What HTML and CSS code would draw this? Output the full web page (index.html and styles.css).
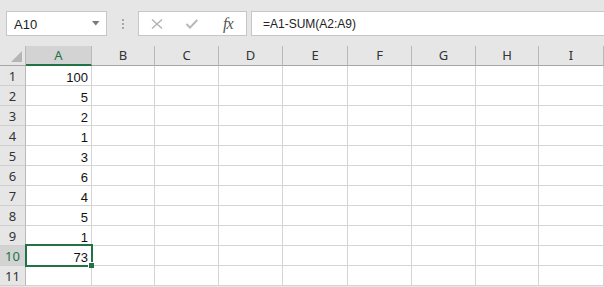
FILE: index.html
```html
<!DOCTYPE html>
<html lang="en">
<head>
  <meta charset="UTF-8">
  <title>Worksheet</title>
  <link rel="stylesheet" href="styles.css">
</head>
<body>

  <div class="toolbar">
    <div class="namebox">
      <span>A10</span>
      <svg class="caret" width="8" height="5" viewBox="0 0 8 5"><path d="M0 0H7.5L3.75 4.5Z" fill="#7a7a7a"/></svg>
    </div>
    <div class="grip"><i></i><i></i><i></i></div>
    <div class="buttons">
      <svg width="12" height="10" viewBox="0 0 12 10"><path d="M1 0.5L11 9.5M11 0.5L1 9.5" stroke="#b2b2b2" stroke-width="1.4" fill="none"/></svg>
      <svg width="12" height="10" viewBox="0 0 12 10"><path d="M0.5 5L4 8.6L11.2 1" stroke="#b8b8b8" stroke-width="2" fill="none"/></svg>
      <span class="fx">fx</span>
    </div>
    <div class="formula">=A1-SUM(A2:A9)</div>
  </div>

  <div class="sheet" id="sheet"></div>

  <script>
    const sheet = document.getElementById("sheet");
    const cols = ["A", "B", "C", "D", "E", "F", "G", "H", "I"];
    const values = [100, 5, 2, 1, 3, 6, 4, 5, 1, 73];

    let html = `<div class="head corner"><span class="tri"></span></div>`;
    cols.forEach(c => {
      html += `<div class="head col ${c === "A" ? "active" : ""}">${c}</div>`;
    });

    for (let r = 1; r <= 11; r++) {
      html += `<div class="head row ${r === 10 ? "active" : ""}">${r}</div>`;
      cols.forEach(c => {
        const v = c === "A" && values[r - 1] !== undefined ? values[r - 1] : "";
        const sel = c === "A" && r === 10 ? "selected" : "";
        html += `<div class="cell ${sel}">${v}</div>`;
      });
    }

    sheet.innerHTML = html;
  </script>
</body>
</html>
```

FILE: styles.css
```css
body {
  margin: 0;
  background: #e6e6e6;
  font-family: "Liberation Sans", Arial, sans-serif;
  overflow: hidden;
}

.toolbar {
  display: flex;
  height: 25px;
  padding: 11px 0 10px 6px;
}

.namebox {
  width: 101px;
  box-sizing: border-box;
  background: #fff;
  border: 1px solid #c6c6c6;
  display: flex;
  align-items: center;
  justify-content: space-between;
  padding: 1px 6px 0 7px;
  font-size: 13px;
  color: #222;
}

.caret {
  margin-top: -1px;
}

.grip {
  width: 31px;
  display: flex;
  flex-direction: column;
  align-items: center;
  justify-content: center;
  gap: 2px;
  padding-top: 1px;
  box-sizing: border-box;
}

.grip i {
  width: 2px;
  height: 2px;
  background: #a8a8a8;
}

.buttons {
  width: 109px;
  box-sizing: border-box;
  background: #fff;
  border: 1px solid #c6c6c6;
  display: flex;
  align-items: center;
  padding: 0 0 0 12px;
  gap: 24px;
}

.buttons svg:nth-child(2) {
  margin-left: -1px;
}

.fx {
  font-family: "Liberation Serif", "Times New Roman", serif;
  font-style: italic;
  font-size: 16px;
  color: #555;
  margin-left: 1px;
  letter-spacing: -1px;
}

.formula {
  flex: 1;
  margin-left: 4px;
  background: #fff;
  border: 1px solid #c6c6c6;
  border-right: none;
  padding: 5px 0 0 11px;
  font-size: 12px;
  color: #222;
}

.sheet {
  display: grid;
  grid-template-columns: 26px 66px 63px 64px 64px 65px 64px 64px 63px 65px;
  grid-auto-rows: 20px;
}

.head {
  box-sizing: border-box;
  font-family: "Noto Sans", sans-serif;
  font-size: 13px;
  color: #333;
  text-align: center;
  background: #e6e6e6;
}

.col {
  border-right: 1px solid #b9b9b9;
  border-bottom: 1px solid #a6a6a6;
  padding-top: 1px;
  line-height: 17px;
}

.col.active {
  background: #d3d3d3;
  border-bottom: 2px solid #217346;
  color: #217346;
}

.row {
  border-right: 1px solid #b9b9b9;
  border-bottom: 1px solid #cfcfcf;
  line-height: 18px;
  padding-top: 1px;
}

.row.active {
  background: #d3d3d3;
  color: #217346;
}

.corner {
  border-right: 1px solid #b9b9b9;
  border-bottom: 1px solid #a6a6a6;
  position: relative;
}

.tri {
  position: absolute;
  right: 3px;
  bottom: 3px;
  width: 0;
  height: 0;
  border-left: 11px solid transparent;
  border-bottom: 11px solid #b5b5b5;
}

.cell {
  box-sizing: border-box;
  background: #fff;
  border-right: 1px solid #d4d4d4;
  border-bottom: 1px solid #d4d4d4;
  text-align: right;
  font-size: 13px;
  color: #111;
  padding: 5px 3px 0 0;
  line-height: 14px;
}

.selected {
  position: relative;
}

.selected::before {
  content: "";
  position: absolute;
  left: -1px;
  top: -2px;
  right: -2px;
  bottom: -2px;
  border: 2px solid #217346;
}

.selected::after {
  content: "";
  position: absolute;
  right: -3px;
  bottom: -3px;
  width: 5px;
  height: 5px;
  background: #217346;
  border: 1px solid #fff;
  border-width: 1px 0 0 1px;
}
```
